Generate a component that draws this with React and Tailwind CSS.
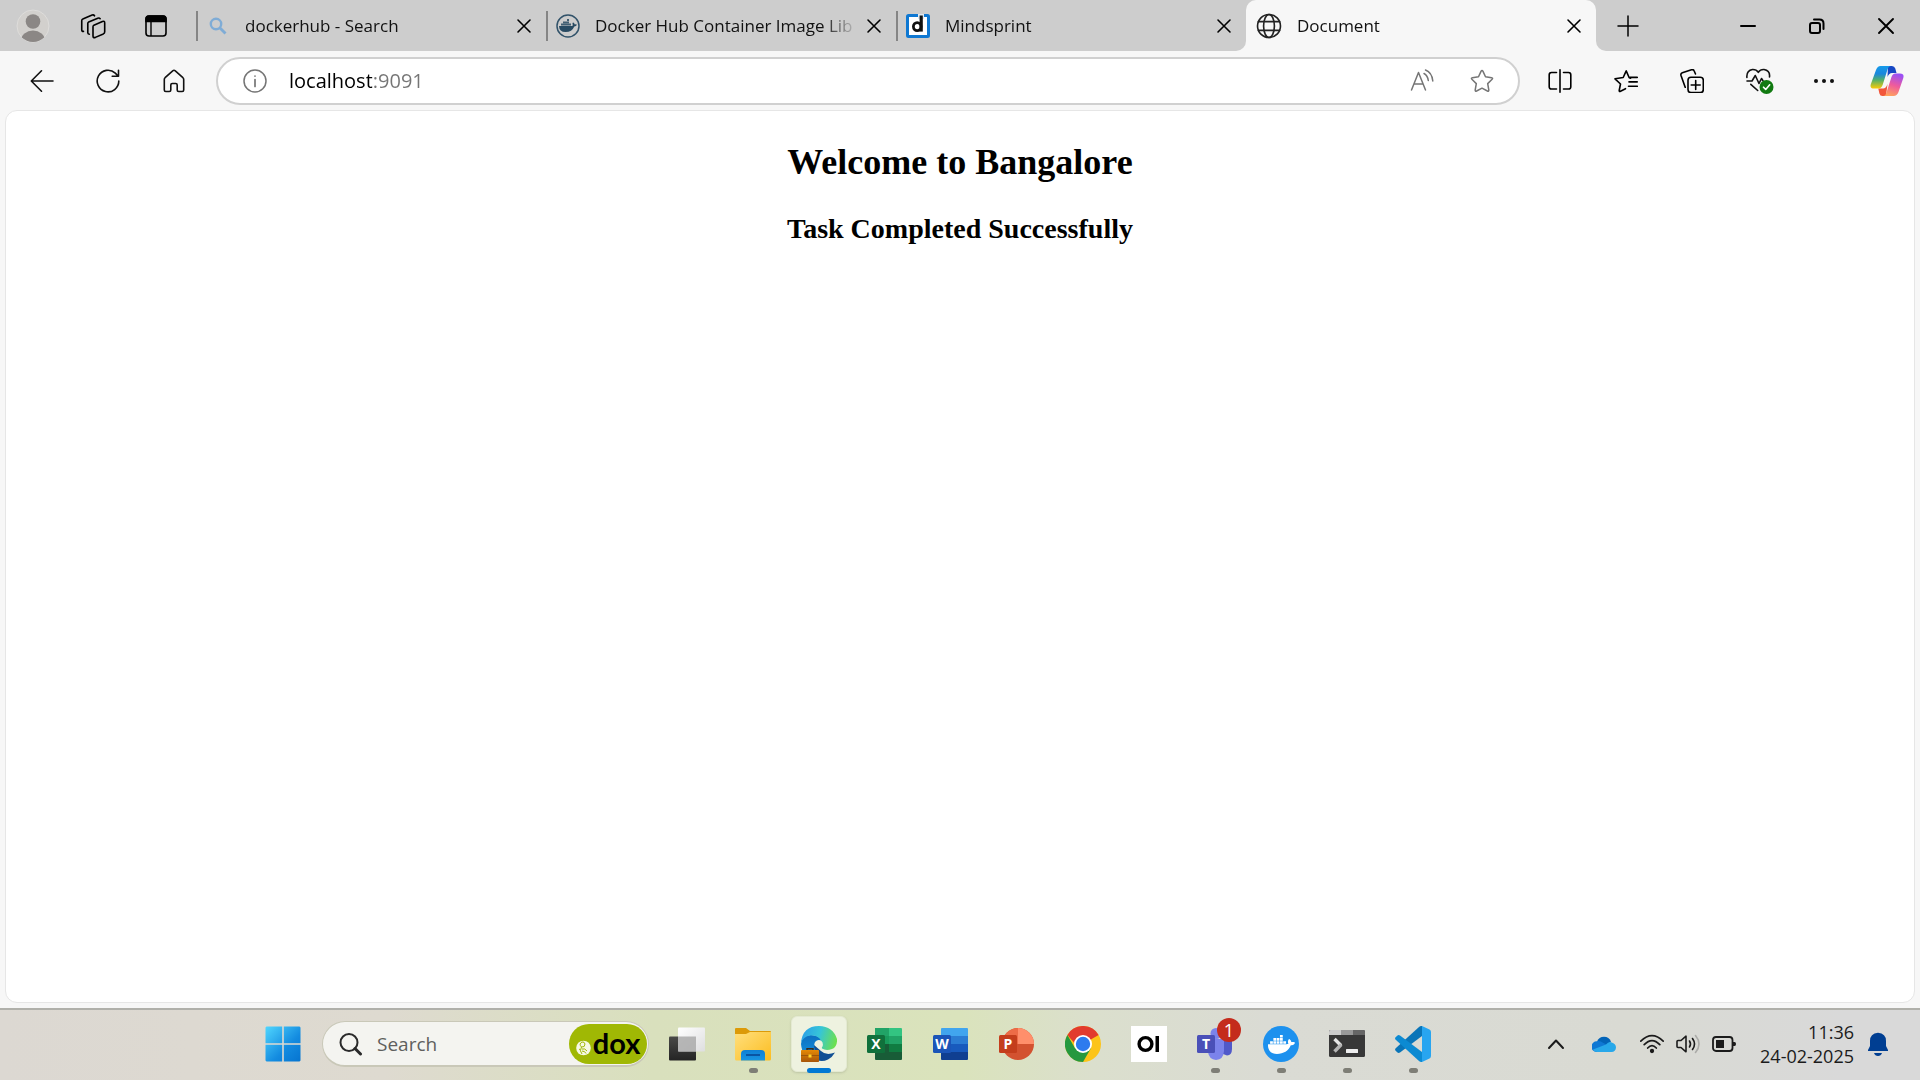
import React from "react";
import { FaDocker } from "react-icons/fa";

function Stroke({ size = 24, w = 1.5, children, className = "" }) {
  return (
    <svg
      width={size}
      height={size}
      viewBox="0 0 24 24"
      fill="none"
      stroke="currentColor"
      strokeWidth={w}
      strokeLinecap="round"
      strokeLinejoin="round"
      className={className}
      aria-hidden="true"
    >
      {children}
    </svg>
  );
}

const Cross = ({ size = 24, w = 1.6 }) => (
  <Stroke size={size} w={w}>
    <path d="M6 6 18 18M18 6 6 18" />
  </Stroke>
);

const Avatar = () => (
  <svg width="34" height="34" viewBox="0 0 34 34" aria-hidden="true">
    <defs>
      <clipPath id="avatarClip">
        <circle cx="17" cy="17" r="16" />
      </clipPath>
    </defs>
    <circle cx="17" cy="17" r="16" fill="#d2d0cd" stroke="#dedddb" strokeWidth="1" />
    <g clipPath="url(#avatarClip)" fill="#8b8785">
      <circle cx="17" cy="12.5" r="7.3" />
      <ellipse cx="17" cy="31.5" rx="12" ry="10" />
    </g>
  </svg>
);

const Workspaces = () => (
  <Stroke size={26} w={1.5}>
    <path d="M12.8 11.2 20.7 7.8Q22.8 7 22.8 9.2V17.2Q22.8 18.6 21.5 19.3L14.2 22.5Q12 23.4 12 21.2V12.6Q12 11.6 12.8 11.2Z" />
    <path d="M18.6 5.2Q17.8 4.2 16.4 4.8L8 8.4Q7.2 8.8 7.2 9.8V18.2Q7.2 19.4 8.6 19.6" />
    <path d="M13.4 2.6Q12.6 1.4 11.2 1.9L2.6 5.6Q1.6 6 1.6 7.2V15.4Q1.6 17 3.2 17" />
  </Stroke>
);

const TabActions = () => (
  <svg width="24" height="24" viewBox="0 0 24 24" fill="none" stroke="#000" strokeWidth="1.6" aria-hidden="true">
    <rect x="2" y="2" width="20" height="20" rx="3" />
    <path d="M2 7.5V5Q2 2 5 2H19Q22 2 22 5V7.5Z" fill="#000" />
    <path d="M7 7V22" strokeWidth="1.4" />
  </svg>
);

const Whale = () => (
  <svg width="24" height="24" viewBox="0 0 24 24" aria-hidden="true">
    <circle cx="12" cy="12" r="11" fill="none" stroke="#32536a" strokeWidth="1.5" />
    <g fill="#284a62">
      <path d="M3 12H16.5Q17 10.5 16.4 9L17.4 8.4Q18.6 9.4 18.8 10.4Q20.2 10 21 10.8Q20.2 12.4 18.3 12.4Q16 18 9.6 18Q3.2 18 3 12Z" />
      <path d="M5 9.6H15V11.6H5ZM7 7.4H13V9.2H7ZM11 5H13V7H11Z" opacity=".85" />
    </g>
  </svg>
);

const MindIcon = () => (
  <svg width="24" height="24" viewBox="0 0 24 24" aria-hidden="true">
    <rect x="1.5" y="1.5" width="21" height="21" rx="1" fill="#fff" stroke="#0f78d2" strokeWidth="3" />
    <rect x="12" y="0" width="6" height="5" fill="#dfe9f2" />
    <path d="M15.2 1.5V17.6" stroke="#111" strokeWidth="3.2" />
    <ellipse cx="11.2" cy="12.6" rx="3.8" ry="4" fill="none" stroke="#111" strokeWidth="2.8" />
  </svg>
);

const Globe = () => (
  <Stroke size={26} w={1.5} className="text-[#222]">
    <circle cx="12" cy="12" r="10.6" />
    <ellipse cx="12" cy="12" rx="5" ry="10.6" />
    <path d="M2.2 8H21.8M2.2 16H21.8" />
  </Stroke>
);

const Copilot = () => (
  <svg width="34" height="32" viewBox="0 0 34 32" aria-hidden="true">
    <defs>
      <linearGradient id="cpA" x1="0" y1="0" x2="0" y2="1">
        <stop offset="0" stopColor="#159bea" />
        <stop offset=".35" stopColor="#1b87dc" />
        <stop offset=".62" stopColor="#52b06a" />
        <stop offset="1" stopColor="#fbcb06" />
      </linearGradient>
      <linearGradient id="cpB" x1=".6" y1="0" x2=".3" y2="1">
        <stop offset="0" stopColor="#9a50f5" />
        <stop offset=".5" stopColor="#ef5b9c" />
        <stop offset="1" stopColor="#ffa45c" />
      </linearGradient>
    </defs>
    <path d="M18 1H22Q24.5 1 25.3 3.5L26.5 8H22Q19 8 17.5 12Z" fill="#1748c4" />
    <path d="M16 31H12.5Q10 31 9.4 28.5L8.3 23.5H13Q16 23.5 17.5 19Z" fill="#f2563b" />
    <path d="M21 1H10.5Q7.5 1 6 5L.9 19Q-.6 23.5 4 23.5H8.5Q11.5 23.5 12.8 19.5L17.5 4.5Q18.5 1 21 1Z" fill="url(#cpA)" />
    <path d="M13 31H23.5Q27 31 28.5 27L33.3 13Q34.5 8.5 30 8.5H25.5Q22.5 8.5 21.3 12.5L16.5 27.5Q15.5 31 13 31Z" fill="url(#cpB)" />
  </svg>
);

const STAR = "M12 1.6Q12.6 1.6 13 2.4L15.5 7.8 21.600 8.700Q23.300 9 22.100 10.300L17.700 14.600 18.800 21Q18.900 22.700 17.400 22L12 19.200 6.600 22Q5.100 22.700 5.200 21L6.300 14.600 1.900 10.300Q.700 9 2.400 8.700L8.500 7.800 11 2.400Q11.400 1.600 12 1.600Z";

function Tab({ icon, title, active, iconWidth = "w-6" }) {
  return (
    <div className={`flex h-full min-w-0 flex-1 items-center ${active ? "rounded-t-[10px] bg-[#f7f7f7]" : ""}`}>
      <span className={`h-[30px] w-0.5 shrink-0 ${active ? "" : "bg-[#858585]"}`} />
      <button className="flex min-w-0 flex-1 items-center gap-[15px] pl-2 text-left">
        <span className={`flex shrink-0 justify-center ${iconWidth}`}>{icon}</span>
        <span className="min-w-0 flex-1 overflow-hidden text-[17px] leading-6 whitespace-nowrap text-[#111] [mask-image:linear-gradient(to_right,#000_calc(100%-36px),transparent)]">
          {title}
        </span>
      </button>
      <button aria-label={`Close ${title}`} className="mr-2.5 ml-1 shrink-0">
        <Cross />
      </button>
    </div>
  );
}

function TabStrip() {
  return (
    <header className="flex h-[51px] bg-[#f7f7f7]">
      <div className="flex min-w-0 flex-[1246] items-center rounded-br-[10px] bg-[#cdcdcd]">
        <div className="flex w-[196px] shrink-0 items-center pl-4">
          <button aria-label="Profile"><Avatar /></button>
          <button aria-label="Workspaces" className="ml-[30px]"><Workspaces /></button>
          <button aria-label="Tab actions" className="ml-[38px]"><TabActions /></button>
        </div>
        <Tab
          title="dockerhub - Search"
          icon={
            <svg width="18" height="18" viewBox="0 0 18 18" fill="none" stroke="#7facd6" aria-hidden="true">
              <circle cx="7" cy="7" r="5.2" strokeWidth="2.4" />
              <path d="M11 11 16.5 16.5" strokeWidth="2.8" />
            </svg>
          }
        />
        <Tab title="Docker Hub Container Image Lib" icon={<Whale />} />
        <Tab title="Mindsprint" icon={<MindIcon />} />
      </div>
      <div className="flex min-w-0 flex-[350] bg-[linear-gradient(#cdcdcd_50%,#f7f7f7_50%)]">
        <Tab active title="Document" icon={<Globe />} iconWidth="w-[26px]" />
      </div>
      <div className="min-w-0 flex-[324] rounded-bl-[10px] bg-[#cdcdcd]">
        <div className="flex h-full items-center justify-between pr-[22px] pl-5">
          <button aria-label="New tab">
            <Stroke w={1.5}><path d="M12 2V22M2 12H22" /></Stroke>
          </button>
          <div className="flex gap-[45px]">
            <button aria-label="Minimize"><Stroke w={2}><path d="M5 12H19" /></Stroke></button>
            <button aria-label="Restore">
              <Stroke w={2}>
                <rect x="5" y="9" width="10" height="10" rx="2" />
                <path d="M9 5.6H14.5Q18.5 5.6 18.5 9.6V15" />
              </Stroke>
            </button>
            <button aria-label="Close window"><Stroke w={1.9}><path d="M5 5 19 19M19 5 5 19" /></Stroke></button>
          </div>
        </div>
      </div>
    </header>
  );
}

function Toolbar() {
  return (
    <nav className="flex h-[59px] items-center bg-[#f7f7f7] pr-4 pl-[30px]">
      <div className="flex gap-[42px] text-[#111]">
        <button aria-label="Back">
          <Stroke w={1.6}><path d="M23 12H1.5M11.5 1.8 1.3 12 11.5 22.2" /></Stroke>
        </button>
        <button aria-label="Refresh">
          <Stroke w={1.6}><path d="M22.8 12A10.8 10.8 0 1 1 19.3 4.1L21.8 6.8M22.5 1.2V7.3H16.2" /></Stroke>
        </button>
        <button aria-label="Home">
          <Stroke w={1.6}>
            <path d="M2.3 10.5Q2.3 9.5 3.1 8.7L10.7 1.8Q12 .7 13.3 1.8L20.9 8.7Q21.7 9.5 21.7 10.5V21Q21.7 22.5 20.2 22.5H16.7Q15.2 22.5 15.2 21V16Q15.2 14.5 13.7 14.5H10.3Q8.8 14.5 8.8 16V21Q8.8 22.5 7.3 22.5H3.8Q2.3 22.5 2.3 21Z" />
          </Stroke>
        </button>
      </div>
      <form
        onSubmit={(e) => e.preventDefault()}
        className="ml-[30px] flex h-12 min-w-0 flex-1 items-center rounded-full border-2 border-[#d0d0d0] bg-white pr-6 pl-[25px] text-[#757575]"
      >
        <button type="button" aria-label="Site information">
          <Stroke w={1.5}>
            <circle cx="12" cy="12" r="11" />
            <path d="M12 10.5V17.5M12 7V7.1" strokeWidth="1.7" />
          </Stroke>
        </button>
        <input
          aria-label="Address"
          defaultValue="localhost:9091"
          className="ml-[22px] h-9 min-w-0 flex-1 bg-[linear-gradient(to_right,#000_83px,#757575_83px)] bg-clip-text text-[20px] text-transparent outline-none"
        />
        <button type="button" aria-label="Read aloud">
          <Stroke w={1.5}>
            <path d="M1.5 21 8.5 3.5 15.5 21M4 15H13" />
            <path d="M14 4.5Q17.6 6.5 18.3 11.5M15.5 1Q22 3.5 22.8 12" />
          </Stroke>
        </button>
        <button type="button" aria-label="Add to favorites" className="ml-9">
          <Stroke w={1.5}><path d={STAR} /></Stroke>
        </button>
      </form>
      <div className="ml-7 flex items-center gap-[42px]">
        <button aria-label="Split screen" className="w-6">
          <Stroke w={1.6}>
            <path d="M12 .8V23.2M8.500 3.500H3.500Q1.200 3.500 1.200 5.800V17.700Q1.200 20 3.500 20H8.500M15.500 3.500H20.500Q22.800 3.500 22.800 5.800V17.700Q22.800 20 20.500 20H15.500" />
          </Stroke>
        </button>
        <button aria-label="Favorites" className="w-6">
          <Stroke w={1.6}>
            <path d="M16.6 9.1 15.200 8.800 12.200 1.900 9.200 8.500 1 9.800 6.500 15 5.200 21.500Q5.200 23 6.500 22.300L11.500 19.700" />
            <path d="M16 8.400H23.300M15 12.900H23.300M14.500 17.300H23.300" />
          </Stroke>
        </button>
        <button aria-label="Collections" className="w-6">
          <Stroke w={1.6}>
            <rect x="8" y="8.3" width="15.3" height="15.3" rx="3" />
            <path d="M15.7 11.5V20.4M11.2 16H20.2" />
            <path d="M5.2 18.3 1 6.5Q.4 4.5 2.3 3.8L11.5.8Q13.5.2 14.2 2L15.5 5" />
          </Stroke>
        </button>
        <button aria-label="Browser essentials" className="w-6">
          <svg width="28" height="28" viewBox="0 0 28 28" className="max-w-none" fill="none" stroke="#111" strokeWidth="1.6" strokeLinecap="round" strokeLinejoin="round" aria-hidden="true">
            <path d="M.9 10.5Q.3 3.5 6.5 2.5 10.3 2.3 12.3 5.3 14.3 2.3 18 2.5 24.3 3.5 23.5 10" />
            <path d="M1 14H6L9.3 8.5 13 16.5 15.5 11.5 17 13.8M4.800 17.300 11.700 23.500" />
            <circle cx="20.5" cy="20" r="7" fill="#117a11" stroke="none" />
            <path d="M17.5 20.2 19.7 22.4 23.7 17.8" stroke="#fff" />
          </svg>
        </button>
        <button aria-label="More" className="w-6">
          <svg width="24" height="24" viewBox="0 0 24 24" fill="#111" aria-hidden="true">
            <circle cx="4" cy="12" r="2" /><circle cx="12" cy="12" r="2" /><circle cx="20" cy="12" r="2" />
          </svg>
        </button>
        <button aria-label="Copilot" className="-ml-2"><Copilot /></button>
      </div>
    </nav>
  );
}

const StartIcon = () => (
  <svg width="36" height="36" viewBox="0 0 36 36" aria-hidden="true">
    <defs>
      <linearGradient id="win" x1="0" y1="0" x2="36" y2="36" gradientUnits="userSpaceOnUse">
        <stop offset="0" stopColor="#52d8ff" /><stop offset=".6" stopColor="#138be0" /><stop offset="1" stopColor="#0573cf" />
      </linearGradient>
    </defs>
    <path d="M1.5.5H17.2V17.2H.5V1.5ZM18.8.5H34.5L35.5 1.5V17.2H18.8ZM.5 18.8H17.2V35.5H1.5L.5 34.5ZM18.8 18.8H35.5V34.5L34.5 35.5H18.8Z" fill="url(#win)" />
  </svg>
);

const TaskView = () => (
  <svg width="36" height="36" viewBox="0 0 36 36" aria-hidden="true">
    <defs>
      <linearGradient id="tv1" x1="0" y1="0" x2="0" y2="1"><stop stopColor="#4a4a48" /><stop offset="1" stopColor="#242424" /></linearGradient>
      <linearGradient id="tv2" x1="0" y1="0" x2="1" y2="1"><stop stopColor="#fff" /><stop offset="1" stopColor="#dededf" /></linearGradient>
    </defs>
    <rect x="0" y="10.5" width="27" height="24" rx="1" fill="url(#tv1)" />
    <rect x="9" y="1.5" width="27" height="24" rx="1" fill="url(#tv2)" />
    <path d="M9 10.5H27V25.5H9Z" fill="#aaa" opacity=".85" />
  </svg>
);

const Explorer = () => (
  <svg width="36" height="36" viewBox="0 0 36 36" aria-hidden="true">
    <defs>
      <linearGradient id="fo" x1="0" y1="0" x2="1" y2="1"><stop stopColor="#ffdf7d" /><stop offset="1" stopColor="#fcbd20" /></linearGradient>
      <linearGradient id="fb" x1="0" y1="0" x2="0" y2="1"><stop stopColor="#0f7fd4" /><stop offset="1" stopColor="#1895e2" /></linearGradient>
    </defs>
    <path d="M0 3Q0 2 1 2H11L15 5H35Q36 5 36 6V12H0Z" fill="#dc9a08" />
    <path d="M0 8H11L15 6H36V33Q36 34.5 34.5 34.5H1.5Q0 34.5 0 33Z" fill="url(#fo)" />
    <path d="M6 34.5V28Q6 24 10 24H26Q30 24 30 28V34.5Z" fill="url(#fb)" />
    <path d="M11 29H25" stroke="#0a4f9c" strokeWidth="1.8" />
  </svg>
);

const Edge = () => (
  <svg width="36" height="36" viewBox="0 0 36 36" aria-hidden="true">
    <defs>
      <linearGradient id="ed1" x1="0" y1=".3" x2="1" y2=".5"><stop stopColor="#2a9fe8" /><stop offset=".5" stopColor="#36c5d8" /><stop offset="1" stopColor="#6ce04e" /></linearGradient>
      <linearGradient id="ed2" x1="0" y1="0" x2="0" y2="1"><stop stopColor="#0d6fbf" /><stop offset="1" stopColor="#1496e4" /></linearGradient>
      <linearGradient id="bc" x1="0" y1="0" x2="0" y2="1"><stop stopColor="#e58a06" /><stop offset="1" stopColor="#a75508" /></linearGradient>
    </defs>
    <path d="M11 30Q18 38 27 33.5 31.5 31 34 26.500 25 30 20 25L13 19Z" fill="#114f94" />
    <path d="M0 18Q0 10 9 9 18 8.5 21 15 17 12.5 14 16 12 20 15 26L13 34Q1 31 0 18Z" fill="url(#ed2)" />
    <path d="M0 17Q1.5 0 18 0 32 .5 36 13 36.5 21 31 23 25 25 21 22.5 20.5 21.5 21.5 20.5 22.8 17 20 14.5 17 9 9.500 9.500 2 10.500 0 17Z" fill="url(#ed1)" />
    <rect x="0" y="24" width="18" height="12" rx=".8" fill="url(#bc)" />
    <path d="M6 24V22.7H12V24" fill="none" stroke="#3b2b1b" strokeWidth="1.4" />
    <path d="M0 29.5H18" stroke="#9d570a" strokeWidth="1" />
    <rect x="7.5" y="28.5" width="3" height="3" fill="#ffd42c" />
  </svg>
);

const Letter = ({ x, y, children, size = 14 }) => (
  <text x={x} y={y} fontSize={size} fontWeight="700" fill="#fff" textAnchor="middle" fontFamily="Open Sans, sans-serif">{children}</text>
);

const Excel = () => (
  <svg width="36" height="36" viewBox="0 0 36 36" aria-hidden="true">
    <path d="M8 2H22V18H8Z" fill="#21a366" /><path d="M22 2H34Q35 2 35 3V10H22Z" fill="#33c481" />
    <path d="M8 10H22V18H8Z" fill="#189a5a" /><path d="M22 10H35V18H22Z" fill="#21a366" />
    <path d="M8 18H22V26H8Z" fill="#185c37" /><path d="M22 18H35V26H22Z" fill="#107c41" />
    <path d="M8 26H35V33Q35 34 34 34H9Q8 34 8 33Z" fill="#185c37" />
    <rect x="0" y="9" width="18" height="18" rx="1.5" fill="#10703b" />
    <Letter x="9" y="23">X</Letter>
  </svg>
);

const Word = () => (
  <svg width="36" height="36" viewBox="0 0 36 36" aria-hidden="true">
    <path d="M8 10V3Q8 2 9 2H34Q35 2 35 3V10Z" fill="#41a5ee" /><path d="M8 10H35V18H8Z" fill="#2b7cd3" />
    <path d="M8 18H35V26H8Z" fill="#185abd" /><path d="M8 26H35V33Q35 34 34 34H9Q8 34 8 33Z" fill="#103f91" />
    <rect x="0" y="9" width="18" height="18" rx="1.5" fill="#1b55b8" />
    <Letter x="9" y="23">W</Letter>
  </svg>
);

const PowerPoint = () => (
  <svg width="36" height="36" viewBox="0 0 36 36" aria-hidden="true">
    <circle cx="19" cy="18" r="16" fill="#d35230" />
    <path d="M19 18V2A16 16 0 0 0 3 18Z" fill="#ed6c47" /><path d="M19 18V2A16 16 0 0 1 35 18Z" fill="#ff8f6b" />
    <rect x="0" y="9" width="18" height="18" rx="1.5" fill="#c43e1c" />
    <Letter x="9" y="23">P</Letter>
  </svg>
);

const Chrome = () => (
  <svg width="36" height="36" viewBox="0 0 36 36" aria-hidden="true">
    <circle cx="18" cy="18" r="18" fill="#fcc419" />
    <path d="M18 18H10.2L2.4 9A18 18 0 0 1 33.6 9Z" fill="#e23b2e" />
    <path d="M2.4 9A18 18 0 0 0 18 36L25.8 22.5 18 18 10.2 22.5Z" fill="#25983f" />
    <circle cx="18" cy="18" r="9" fill="#fff" />
    <circle cx="18" cy="18" r="7.2" fill="#2d7bee" />
  </svg>
);

const Oi = () => (
  <svg width="36" height="36" viewBox="0 0 36 36" aria-hidden="true">
    <rect width="36" height="36" fill="#fff" />
    <circle cx="14.5" cy="18" r="6.4" fill="none" stroke="#000" strokeWidth="3.4" />
    <rect x="24.5" y="10" width="3.5" height="16" fill="#000" />
  </svg>
);

const Teams = () => (
  <svg width="36" height="36" viewBox="0 0 36 36" aria-hidden="true">
    <path d="M22 13H34Q35 13 35 14V23Q35 29 30 29.5 26 29 24 26Z" fill="#5059c9" />
    <circle cx="19" cy="7.5" r="5.5" fill="#7b83eb" />
    <path d="M11 13H26Q27 13 27 14V25Q26.5 33.5 19 34 12 33.5 11 26Z" fill="#7b83eb" />
    <rect x="0" y="9" width="18" height="18" rx="1.5" fill="#4a50b8" />
    <Letter x="9" y="23">T</Letter>
  </svg>
);

const DockerIcon = () => (
  <span className="flex size-9 items-center justify-center rounded-full bg-[#1d91ee] text-white">
    <FaDocker size={27} />
  </span>
);

const Terminal = () => (
  <svg width="36" height="36" viewBox="0 0 36 36" aria-hidden="true">
    <rect x="0" y="4" width="36" height="27" rx="1.5" fill="#383838" />
    <path d="M0 9V5.5Q0 4 1.5 4H12V9Z" fill="#ccc" /><path d="M12 4H24V9H12Z" fill="#999" /><path d="M24 4H34.5Q36 4 36 5.5V9H24Z" fill="#666" />
    <path d="M5.5 13 12 19.5" stroke="#e6e6e6" strokeWidth="3.4" /><path d="M12.3 18.5 5.5 25.5" stroke="#b5b5b5" strokeWidth="3.4" />
    <rect x="17" y="23" width="12" height="4" rx=".5" fill="#eee" />
  </svg>
);

const VsCode = () => (
  <svg width="36" height="36" viewBox="0 0 36 36" aria-hidden="true">
    <path d="M27 0V10L5 26.5Q3.5 27.5 2.2 26.3L.6 24.8Q-.5 23.5.7 22.3L24 1Q25.5-.2 27 0Z" fill="#0a75b8" />
    <path d="M27 36V26L5 9.5Q3.5 8.5 2.2 9.7L.6 11.2Q-.5 12.5.7 13.7L24 35Q25.5 36.2 27 36Z" fill="#0c8ad2" />
    <path d="M27 0 34.5 3.5Q36 4.2 36 6V30Q36 31.8 34.5 32.5L27 36Z" fill="#28a5f0" />
  </svg>
);

const APPS = [
  { name: "Task view", icon: <TaskView /> },
  { name: "File Explorer", icon: <Explorer />, open: true },
  { name: "Microsoft Edge", icon: <Edge />, active: true },
  { name: "Excel", icon: <Excel /> },
  { name: "Word", icon: <Word /> },
  { name: "PowerPoint", icon: <PowerPoint /> },
  { name: "Google Chrome", icon: <Chrome /> },
  { name: "OI", icon: <Oi /> },
  { name: "Teams", icon: <Teams />, open: true, badge: "1" },
  { name: "Docker Desktop", icon: <DockerIcon />, open: true },
  { name: "Terminal", icon: <Terminal />, open: true },
  { name: "Visual Studio Code", icon: <VsCode />, open: true },
];

function AppButton({ app }) {
  return (
    <button
      aria-label={app.name}
      className={`relative flex h-14 w-14 shrink-0 items-center justify-center rounded-md ${
        app.active ? "border border-[#e4ead2] bg-[#eef2e0] shadow-sm" : ""
      }`}
    >
      {app.icon}
      {app.badge && (
        <span className="absolute top-0.5 right-0.5 flex size-6 items-center justify-center rounded-full bg-[#c42b1c] text-[18px] leading-6 text-white">
          {app.badge}
        </span>
      )}
      {app.open && <span className="absolute -bottom-px h-[5px] w-[9px] rounded-full bg-[#7e7e76]" />}
      {app.active && <span className="absolute -bottom-0.5 h-[5px] w-6 rounded-full bg-[#0078d4]" />}
    </button>
  );
}

function Taskbar() {
  return (
    <footer className="flex h-[72px] items-center border-t-2 border-[#b0b0aa] bg-[linear-gradient(to_right,#dcd8d2_0%,#dedad0_20%,#d9e0bd_34%,#dae3bc_50%,#dbdfcd_57%,#dadbd4_66%,#d9dad3_85%,#d9d9d9_96%)] pr-[30px] pb-0.5 pl-[265px]">
      <button aria-label="Start"><StartIcon /></button>
      <label className="ml-[21px] flex h-[46px] w-[327px] shrink-0 items-center rounded-full border border-b-2 border-[#c9c8b8] bg-[#f4f4f0] pr-px pl-4">
        <svg width="24" height="24" viewBox="0 0 24 24" fill="none" stroke="#2a2a2a" aria-hidden="true">
          <circle cx="10" cy="10.5" r="8.5" strokeWidth="2" />
          <path d="M16 16.5 21.5 22" strokeWidth="3" strokeLinecap="round" />
        </svg>
        <input
          aria-label="Search"
          placeholder="Search"
          className="ml-3.5 h-8 min-w-0 flex-1 bg-transparent text-[19px] text-[#222] outline-none placeholder:text-[#5f5f5d]"
        />
        <span className="flex h-10 w-[78px] items-center justify-center rounded-full bg-[#a0b804] text-black">
          <svg width="15" height="16" viewBox="0 0 15 16" className="mt-2" aria-hidden="true">
            <circle cx="7.5" cy="8" r="7.3" fill="#f6f8e4" />
            <path d="M6 2Q2.5 4 5.5 7 9 7.5 9 4 8.5 1.5 6 2M5.5 7Q3 11 6 14M6 9Q9 8 11 11M6 11Q9 11 10 13.5M3 9 4.5 10" fill="none" stroke="#a0b804" />
          </svg>
          <span className="ml-0.5 pb-0.5 font-[Lato,sans-serif] text-[29px] leading-8 font-bold">dox</span>
        </span>
      </label>
      <div className="ml-[10px] flex gap-2.5">
        {APPS.map((app) => <AppButton key={app.name} app={app} />)}
      </div>
      <div className="ml-auto flex items-center text-[#1b1b1b]">
        <button aria-label="Show hidden icons">
          <Stroke w={2} size={24}><path d="M5 16 12 8.5 19 16" /></Stroke>
        </button>
        <button aria-label="OneDrive" className="ml-6">
          <svg width="24" height="24" viewBox="0 0 24 24" aria-hidden="true">
            <path d="M5 9.5A7.5 7.5 0 0 1 19 9.5L13 15Z" fill="#0364b8" />
            <path d="M4.5 20A5.3 5.3 0 0 1 5 9.3Q8 8.5 11 10.8L17 14 6 20Z" fill="#0f78d4" />
            <path d="M14 12.5Q17 8.5 20.3 10.8 23.8 12 24 15.5 23.6 19.8 19.5 20H5Q1.8 19.8 1 17.5Z" fill="#28a8ea" />
          </svg>
        </button>
        <button aria-label="Network, volume and battery" className="ml-6 flex gap-3">
          <Stroke w={1.7}>
            <path d="M.8 9.2Q12-1.8 23.2 9.2M4.2 12.7Q12 4.5 19.8 12.7M7.7 16Q12 11.3 16.3 16" />
            <circle cx="12" cy="19" r="1.3" fill="currentColor" />
          </Stroke>
          <Stroke w={1.6}>
            <path d="M1 9.5Q1 8.5 2 8.5H5L10 4.2V19.8L5 15.5H2Q1 15.5 1 14.5Z" />
            <path d="M13.5 9Q15.5 12 13.5 15M16.5 6.5Q20.5 12 16.5 17.5" />
            <path d="M19.5 3.5Q26.5 12 19.5 20.5" stroke="#ababa8" />
          </Stroke>
          <svg width="24" height="24" viewBox="0 0 24 24" fill="none" stroke="currentColor" strokeWidth="1.8" aria-hidden="true">
            <rect x="1" y="5" width="19.5" height="14" rx="3" />
            <rect x="4" y="8" width="8" height="8" fill="currentColor" stroke="none" />
            <path d="M21 10H22.5Q24 10 24 12T22.5 14H21Z" fill="currentColor" stroke="none" />
          </svg>
        </button>
        <button aria-label="Date and time" className="ml-6 text-right text-[18px] leading-6">
          <span className="block">11:36</span>
          <span className="block">24-02-2025</span>
        </button>
        <button aria-label="Notifications" className="ml-3">
          <svg width="24" height="24" viewBox="0 0 24 24" fill="#003e92" aria-hidden="true">
            <path d="M12 .8Q20 1.5 20 9V14L22 18V19H2V18L4 14V9Q4 1.5 12 .8ZM8 21H16Q15 24 12 24T8 21Z" />
          </svg>
        </button>
      </div>
    </footer>
  );
}

export default function App() {
  return (
    <div className="flex min-h-screen flex-col bg-[#f7f7f7] font-['Open_Sans',sans-serif] text-black">
      <TabStrip />
      <Toolbar />
      <div className="flex flex-1 flex-col px-[5px] pb-[5px]">
        <main className="flex-1 rounded-xl border border-[#e6e6e6] bg-white pt-[30px] text-center font-['Liberation_Serif',serif] font-bold">
          <h1 className="text-[36px] leading-[42px]">Welcome to Bangalore</h1>
          <h2 className="mt-7 text-[28px] leading-9">Task Completed Successfully</h2>
        </main>
      </div>
      <Taskbar />
    </div>
  );
}
